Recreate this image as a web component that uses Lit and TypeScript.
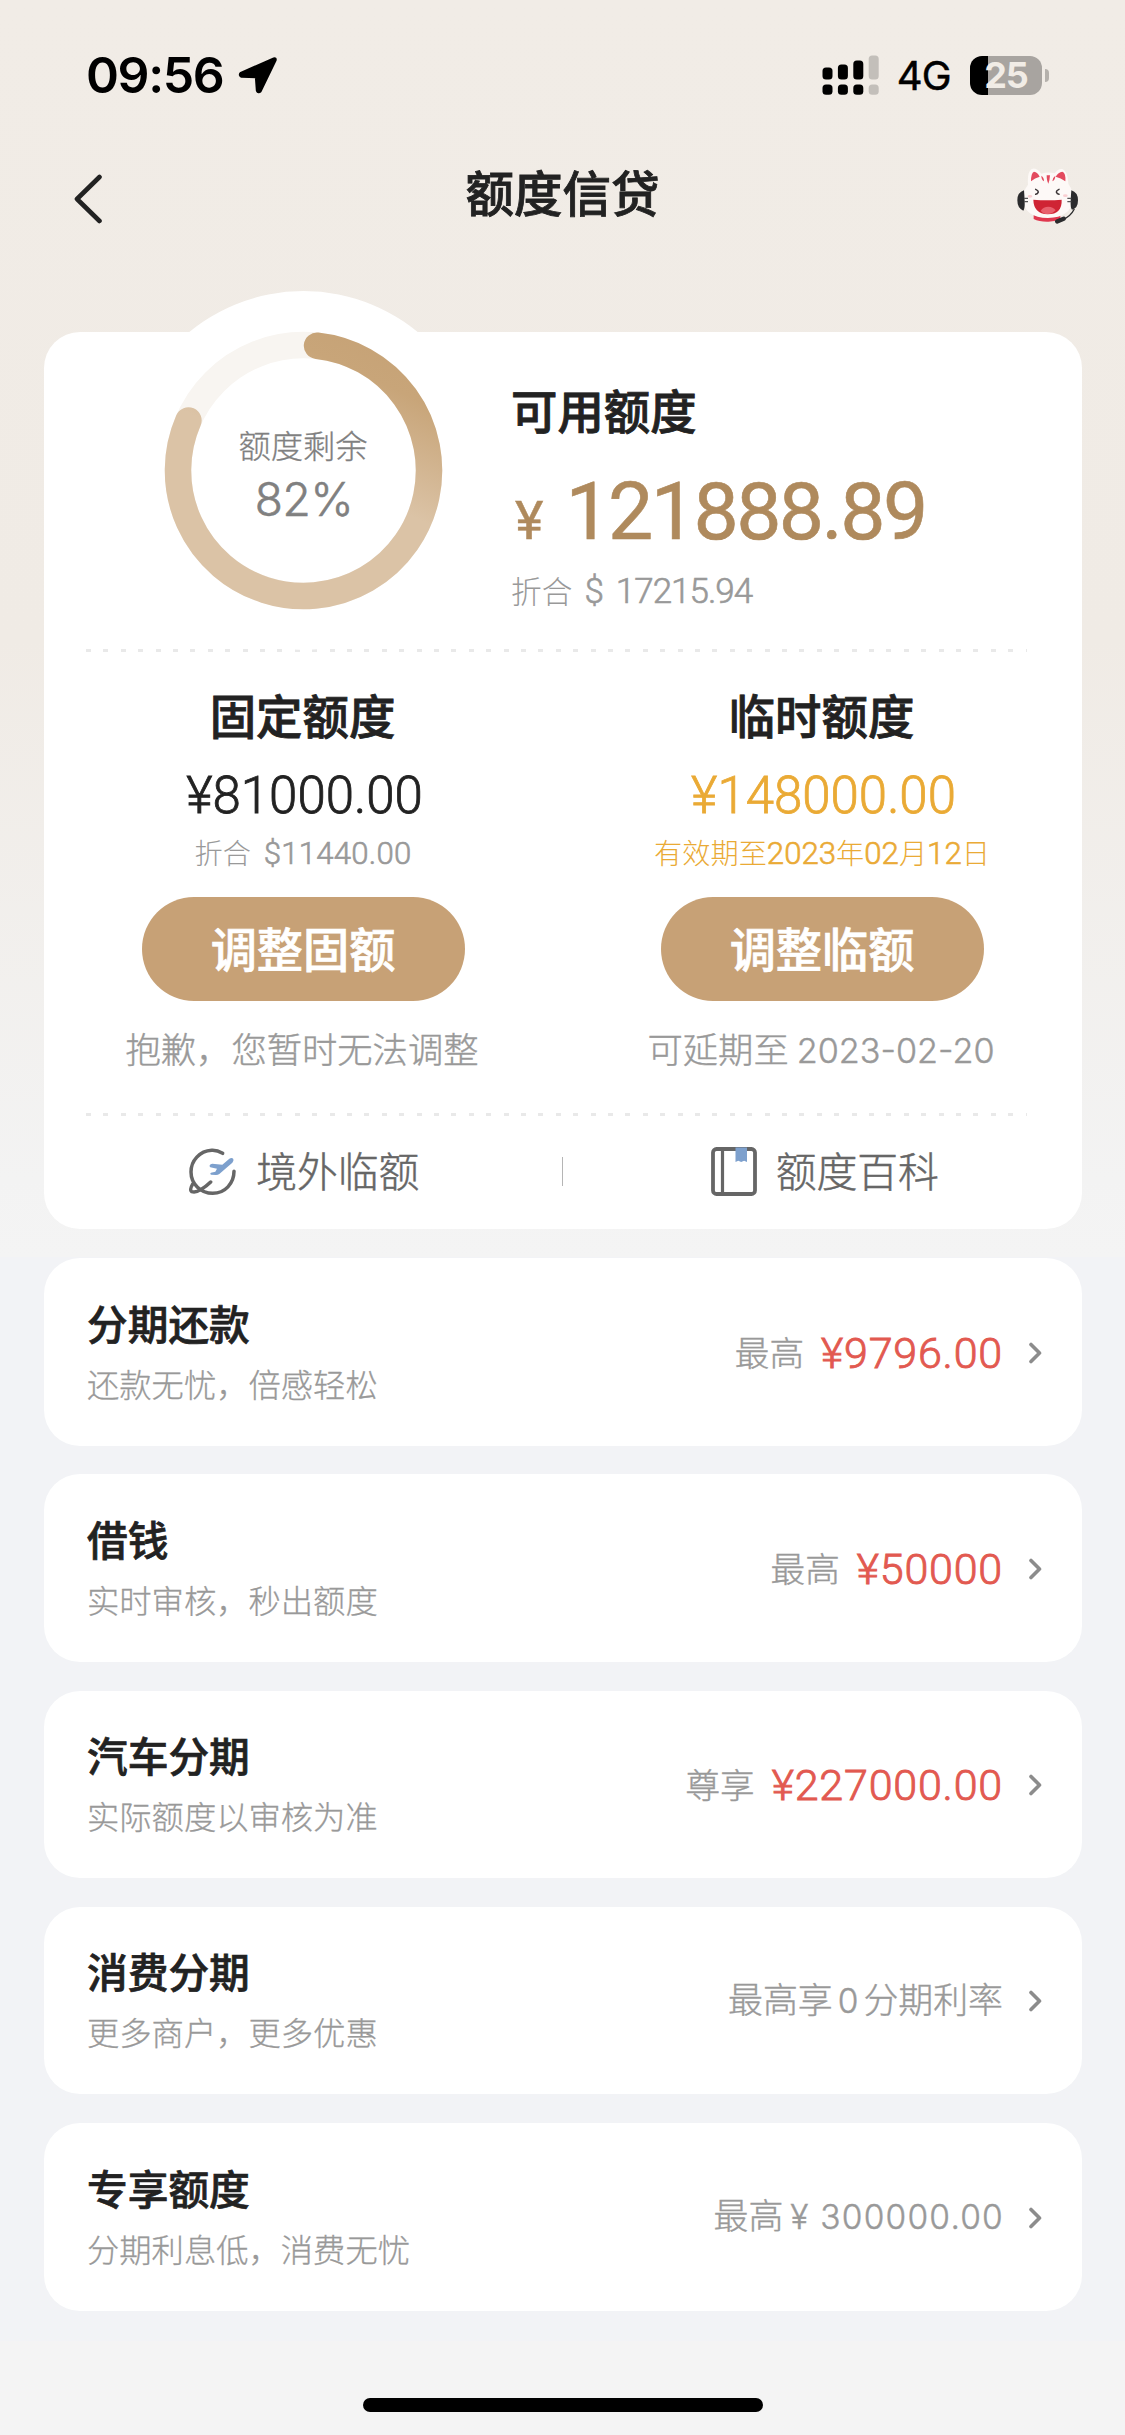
import { LitElement, html, svg, css, nothing } from "lit";
import { customElement, property } from "lit/decorators.js";

interface Offer {
  title: string;
  note: string;
  label: string;
  amount?: string;
  digits?: string;
  tail?: string;
}

const OFFERS: Offer[] = [
  { title: "分期还款", note: "还款无忧，倍感轻松", label: "最高", amount: "¥9796.00" },
  { title: "借钱", note: "实时审核，秒出额度", label: "最高", amount: "¥50000" },
  { title: "汽车分期", note: "实际额度以审核为准", label: "尊享", amount: "¥227000.00" },
  { title: "消费分期", note: "更多商户，更多优惠", label: "最高享", digits: "0", tail: "分期利率" },
  { title: "专享额度", note: "分期利息低，消费无忧", label: "最高", digits: "¥ 300000.00" },
];

@customElement("status-bar")
class StatusBar extends LitElement {
  static styles = css`
    :host {
      display: flex;
      justify-content: space-between;
      align-items: center;
      height: 150px;
      box-sizing: border-box;
      padding: 0 76px 0 86px;
      color: #000;
      font-family: Inter, "Liberation Sans", sans-serif;
    }
    .side { display: flex; align-items: center; }
    .time { font-size: 50px; font-weight: 600; letter-spacing: -1.4px; line-height: 60px; }
    .arrow { margin-left: 15px; }
    .net { font-size: 40px; font-weight: 400; letter-spacing: -0.700px; margin: 2px 19px 0 18px; line-height: 50px; -webkit-text-stroke: 0.5px #000; }
    .battery {
      width: 72px;
      height: 39px;
      border-radius: 12px;
      background: linear-gradient(90deg, #000 25%, #a8a4a0 25%);
      color: #f1ece6;
      font-size: 36px;
      font-weight: 700;
      line-height: 39px;
      text-align: center;
      letter-spacing: -1px;
    }
    .nub { width: 4px; height: 13px; margin-left: 3px; border-radius: 0 5px 5px 0; background: #b5b1ac; }
  `;

  render() {
    const bars = [67, 64, 60, 55];
    return html`
      <div class="side">
        <span class="time">09:56</span>
        <svg class="arrow" width="40" height="38" viewBox="0 0 40 38">
          <path d="M36 3 3 17.500Q1.800 19 3.500 20L18.500 20.500 19.500 34.500Q20.500 36.500 22 35L37 4Q37.300 2.500 36 3z" stroke="#000" stroke-width="3.400" stroke-linejoin="round" />
        </svg>
      </div>
      <div class="side">
        <svg width="57" height="40" viewBox="822.5 54.500 57 40">
          ${bars.map((top, i) => svg`
            <g fill=${i === 3 ? "#c3bfba" : "#000"}>
              <rect x=${823 + i * 15.4} y=${top} width="10" height=${79 - top} rx="3.5" />
              <rect x=${823 + i * 15.4} y="84" width="10" height="10.200" rx="3.500" />
            </g>`)}
        </svg>
        <span class="net">4G</span>
        <div class="battery">25</div>
        <div class="nub"></div>
      </div>
    `;
  }
}

@customElement("quota-ring")
class QuotaRing extends LitElement {
  @property({ type: Number }) percent = 0;

  static styles = css`
    :host { display: grid; width: 359px; height: 359px; }
    svg, .label { grid-area: 1 / 1; }
    .label {
      display: flex;
      flex-direction: column;
      align-items: center;
      padding-top: 133px;
      color: #808080;
    }
    .name { font: 300 32.300px/40px "Noto Sans CJK SC", sans-serif; -webkit-text-stroke: 0.300px #808080; }
    .value { font: 300 46px/50px Inter, sans-serif; margin: 10px 0 0 2px; letter-spacing: -0.300px; -webkit-text-stroke: 0.600px #808080; }
  `;

  render() {
    const r = 125.5;
    const point = (deg: number) => {
      const a = (deg * Math.PI) / 180;
      return `${(179.5 + r * Math.sin(a)).toFixed(2)} ${(179.5 - r * Math.cos(a)).toFixed(2)}`;
    };
    const end = this.percent * 3.6 - 1.7;
    return html`
      <svg width="359" height="359" viewBox="0 0 359 359">
        <defs>
          <linearGradient id="gold" gradientUnits="userSpaceOnUse" x1="115" y1="-25" x2="50" y2="115">
            <stop offset="0" stop-color="#c6a276" />
            <stop offset="0.3" stop-color="#c8a579" />
            <stop offset="1.0" stop-color="#dbc3a6" />
          </linearGradient>
        </defs>
        <circle cx="179.500" cy="179.500" r="179.500" fill="#fff" />
        <circle cx="179.500" cy="179.500" r=${r} fill="none" stroke="#f8f5f1" stroke-width="26.500" />
        <path d="M${point(6.2)} A${r} ${r} 0 1 1 ${point(end)}" fill="none" stroke="url(#gold)" stroke-width="26.500" stroke-linecap="round" />
      </svg>
      <div class="label">
        <span class="name">额度剩余</span>
        <span class="value">${this.percent}%</span>
      </div>
    `;
  }
}

@customElement("offer-row")
class OfferRow extends LitElement {
  @property({ attribute: false }) offer!: Offer;

  static styles = css`
    :host {
      display: flex;
      justify-content: space-between;
      height: 187.500px;
      box-sizing: border-box;
      padding: 0 39.500px 0 43.500px;
      border-radius: 36px;
      background: #fff;
      font-family: "Noto Sans CJK SC", sans-serif;
    }
    .title { margin-top: 39.500px; font-size: 40.700px; line-height: 50px; font-weight: 500; color: #222; -webkit-text-stroke: 0.700px #222; }
    .note { margin-top: 15px; font-size: 32.300px; line-height: 40px; font-weight: 300; color: #999; -webkit-text-stroke: 0.300px #999; }
    .right { display: flex; align-items: center; height: 189px; }
    .label { font-size: 34.600px; line-height: 50px; font-weight: 300; color: #999; margin-top: -4px; white-space: pre; -webkit-text-stroke: 0.400px #999; }
    .wide { font-size: 34.900px; }
    .num { font-family: Inter, sans-serif; font-size: 33.500px; }
    .zero { margin: 0 5px; }
    .cash { margin-left: 7px; letter-spacing: 1.200px; margin-right: -1px; }
    .amount { margin-left: 17px; font-family: Roboto, sans-serif; font-weight: 300; font-size: 43px; line-height: 60px; letter-spacing: 0.800px; color: #e25950; -webkit-text-stroke: 0.900px #e25950; }
    .more { margin-left: 26px; }
  `;

  render() {
    const o = this.offer;
    return html`
      <div>
        <div class="title">${o.title}</div>
        <div class="note">${o.note}</div>
      </div>
      <div class="right">
        <span class="label ${o.digits ? "wide" : ""}">${o.label}${o.digits
          ? html`<span class="num ${o.tail ? "zero" : "cash"}">${o.digits}</span>`
          : nothing}${o.tail ?? nothing}</span>
        ${o.amount ? html`<span class="amount">${o.amount}</span>` : nothing}
        <svg class="more" width="13" height="22" viewBox="0 0 13 22" fill="none" stroke="#8c8c8c" stroke-width="3.600" stroke-linecap="round" stroke-linejoin="round">
          <path d="M2 2.500 10.500 11 2 19.500" />
        </svg>
      </div>
    `;
  }
}

@customElement("app-root")
class AppRoot extends LitElement {
  static styles = css`
    :host {
      display: flex;
      flex-direction: column;
      width: 1125px;
      height: 2435px;
      overflow: hidden;
      background:
        linear-gradient(#f4f4f4, #f4f4f4) 0 2341px / 100% 94px no-repeat,
        linear-gradient(#f1ece6 0, #f0ebe5 640px, #f3f3f3 1180px, #f4f4f4 1257px) 0 0 / 100% 1257px no-repeat,
        #f2f3f6;
      font-family: "Noto Sans CJK SC", sans-serif;
      color: #222;
    }
    .nav {
      display: grid;
      grid-template-columns: 200px 1fr 200px;
      height: 87px;
      align-items: center;
    }
    .back { margin: 11px 0 0 73px; }
    .title { text-align: center; font-size: 48.500px; font-weight: 500; line-height: 60px; margin-top: -5px; -webkit-text-stroke: 0.800px #222; }
    .mascot { margin: 4px 0 0 92px; }
    .card {
      height: 897px;
      margin: 95px 43.500px 0 43.500px;
      border-radius: 36px;
      background: #fff;
      flex: none;
    }
    .summary { display: flex; height: 317px; }
    quota-ring { margin: -41px 0 0 80px; }
    .total { padding: 46.500px 0 0 28.500px; }
    .h { font-size: 46.400px; line-height: 60px; font-weight: 500; -webkit-text-stroke: 0.800px #222; }
    .big { display: flex; align-items: baseline; margin-top: 33.500px; height: 80px; font-family: Roboto, sans-serif; color: #af8a5d; }
    .yen { font-size: 54px; line-height: 60px; margin-left: 4px; -webkit-text-stroke: 0.500px #af8a5d; }
    .sum { font-size: 80.600px; line-height: 80px; letter-spacing: -2.600px; margin-left: 22px; -webkit-text-stroke: 0.600px #af8a5d; }
    .approx { display: flex; align-items: baseline; margin-top: 18px; color: #999; font-weight: 300; font-size: 30.700px; line-height: 40px; }
    .approx .n { font: 300 35px/40px Roboto, sans-serif; margin-left: 12px; letter-spacing: -1px; -webkit-text-stroke: 0.600px #999; }
    .approx .n + .n { margin-left: 13px; }
    .dash {
      height: 3px;
      margin: 0 55px 0 42.500px;
      background: repeating-linear-gradient(90deg, #e9e9e9 0 5px, transparent 5px 17.400px);
    }
    .limits { display: grid; grid-template-columns: 1fr 1fr; height: 461px; }
    .limit { display: flex; flex-direction: column; align-items: center; padding-top: 31.500px; }
    .limit .h { margin-left: -1px; }
    .amount { font: 300 51px/60px Roboto, sans-serif; margin: 22px 0 0 3px; -webkit-text-stroke: 0.800px currentColor; }
    .sub { display: flex; align-items: baseline; margin-top: 6px; font-size: 28.200px; line-height: 40px; font-weight: 300; color: #999; white-space: nowrap; }
    .sub .n { font: 300 31.200px/40px Roboto, sans-serif; -webkit-text-stroke: 0.600px currentColor; }
    .usd { margin-left: 13px; letter-spacing: 0.200px; }
    .amount.gold, .sub.gold { color: #eaaa35; }
    .btn {
      width: 323px;
      height: 104px;
      box-sizing: border-box;
      padding: 0 0 5px;
      margin-top: 23.500px;
      border: 0;
      border-radius: 52px;
      background: #c7a176;
      color: #fff;
      font: 500 46.200px/60px "Noto Sans CJK SC", sans-serif;
      -webkit-text-stroke: 0.700px #fff;
    }
    .tip { margin: 21.500px 0 0 -2px; font-size: 35.300px; line-height: 50px; font-weight: 300; color: #999; white-space: nowrap; -webkit-text-stroke: 0.400px #999; }
    .tip .n { font-family: Inter, sans-serif; font-size: 34.200px; margin-left: 8px; }
    .links { display: grid; grid-template-columns: 1fr 1px 1fr; align-items: center; height: 111px; color: #666; }
    .link { display: flex; align-items: center; justify-content: center; gap: 19px; padding-left: 3px; font-size: 40.800px; line-height: 50px; font-weight: 300; -webkit-text-stroke: 0.500px #666; }
    .link span { margin-top: -4px; }
    .link + .sep + .link { padding-left: 5px; }
    .sep { height: 29px; background: #b5b5b5; }
    .offers { display: flex; flex-direction: column; gap: 28.800px; margin: 29px 43.500px 0 43.500px; }
    .home { flex: none; width: 400px; height: 14px; border-radius: 7px; background: #000; margin: 87px auto 0; }
  `;

  private mascot() {
    return html`
      <svg class="mascot" width="62" height="56" viewBox="110 85 186 168">
        <path d="M160 225h80v14q-20 8-40 7-24 0-40-8z" fill="#e0384f" />
        <path d="M143 135Q140 92 157 87q12-2 26 15 20-6 40-1Q234 86 246 88q16 6 18 44 16 22 13 50-6 52-74 53-70-1-75-54-1-26 15-46z" fill="#fdf9f7" />
        <path d="M152 125q0-26 9-29 11 2 17 15-14 3-26 14z" fill="#e34a5e" />
        <path d="M255 125q2-26-9-29-12 1-20 15 15 3 29 14z" fill="#e34a5e" />
        <path d="M183 108q8 5 8 17-8-5-8-17zM199 107q5 0 10 0-1 17-5 25-5-8-5-25zM225 108q-8 5-9 17 9-5 9-17z" fill="#e34a5e" />
        <path d="M166 149q8 3 8 8-2 6-8 7M236 149q-8 3-8 8 2 6 8 7" fill="none" stroke="#3a3436" stroke-width="4.500" stroke-linecap="round" />
        <ellipse cx="149" cy="170" rx="7" ry="4" fill="#f9cfd2" />
        <ellipse cx="255" cy="168" rx="7" ry="4" fill="#f9cfd2" />
        <path d="M159 180q43 4 85 0 2 43-42 44-42-2-43-44z" fill="#cf2434" />
        <path d="M181 213q8-12 23-12 14 0 22 11-9 11-24 11-14 0-21-10z" fill="#e8606d" />
        <path d="M131 152q-20 6-20 30 0 24 18 31 5-6 4-28t-2-33zM273 152q20 6 20 30 0 24-18 28-5-6-4-27t2-31z" fill="#2b2b2d" />
        <path d="M131 176h12M131 186h12M273 176h-12M273 186h-12" stroke="#555" stroke-width="4" />
        <path d="M282 208q-12 24-36 32" fill="none" stroke="#2b2b2d" stroke-width="4" />
        <rect x="223" y="235" width="34" height="13" rx="6.500" fill="#2b2b2d" transform="rotate(-22 240 241)" />
      </svg>`;
  }

  private plane() {
    return html`
      <svg width="48" height="48" viewBox="60 82 144 144" fill="none" stroke="#666" stroke-width="10.500" stroke-linecap="round" stroke-linejoin="round">
        <path d="M161 98Q144 88 128 89C92 91 66 120 66 154 66 190 96 218 131 218 168 218 195 188 195 152" />
        <path d="M71 190Q61 208 68 213 80 217 95 207 112 197 125 184" />
        <path d="M122 134q2-5 8-5l30 3 21-18q8-4 12 1 2 5-3 11l-39 34q-4 3-10 3l-15-1q-5-3 0-6l13-3 5-9-20-4q-3-2-2-6z" fill="#7da0cd" stroke="none" />
      </svg>`;
  }

  private book() {
    return html`
      <svg width="46" height="49" viewBox="0 0 46 49" fill="none" stroke="#666" stroke-width="3.800">
        <rect x="2" y="2" width="42" height="45" rx="3.500" />
        <path d="M11.500 2v45" stroke-width="3.200" />
        <path d="M24.500 0.500h11.500V15l-2.900-1.200-2.900 1.200-2.900-1.200-2.800 1.200z" fill="#7da0cd" stroke="none" />
      </svg>`;
  }

  render() {
    return html`
      <status-bar></status-bar>
      <div class="nav">
        <svg class="back" width="30" height="50" viewBox="0 0 30 50" fill="none" stroke="#222" stroke-width="4.600" stroke-linecap="round" stroke-linejoin="round">
          <path d="M26.500 3 4 25 26.500 47" />
        </svg>
        <div class="title">额度信贷</div>
        ${this.mascot()}
      </div>

      <div class="card">
        <div class="summary">
          <quota-ring percent="82"></quota-ring>
          <div class="total">
            <div class="h">可用额度</div>
            <div class="big"><span class="yen">¥</span><span class="sum">121888.89</span></div>
            <div class="approx"><span>折合</span><span class="n">$</span><span class="n">17215.94</span></div>
          </div>
        </div>
        <div class="dash"></div>
        <div class="limits">
          <div class="limit">
            <div class="h">固定额度</div>
            <div class="amount">¥81000.00</div>
            <div class="sub"><span>折合</span><span class="n usd">$11440.00</span></div>
            <button class="btn">调整固额</button>
            <div class="tip">抱歉，您暂时无法调整</div>
          </div>
          <div class="limit">
            <div class="h">临时额度</div>
            <div class="amount gold">¥148000.00</div>
            <div class="sub gold">
              <span>有效期至</span><span class="n">2023</span><span>年</span><span class="n">02</span><span>月</span><span class="n">12</span><span>日</span>
            </div>
            <button class="btn">调整临额</button>
            <div class="tip">可延期至<span class="n">2023-02-20</span></div>
          </div>
        </div>
        <div class="dash"></div>
        <div class="links">
          <div class="link">${this.plane()}<span>境外临额</span></div>
          <div class="sep"></div>
          <div class="link">${this.book()}<span>额度百科</span></div>
        </div>
      </div>

      <div class="offers">
        ${OFFERS.map((o) => html`<offer-row .offer=${o}></offer-row>`)}
      </div>
      <div class="home"></div>
    `;
  }
}
